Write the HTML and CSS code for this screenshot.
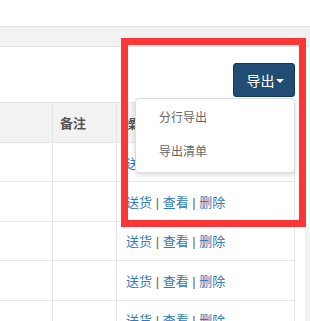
FILE: index.html
```html
<!DOCTYPE html>
<html lang="zh">
<head>
  <meta charset="UTF-8">
  <meta name="viewport" content="width=device-width, initial-scale=1">
  <title>订单列表</title>
  <link rel="stylesheet" href="styles.css">
</head>
<body>

  <div class="top"></div>
  <div class="tabbar"></div>

  <div class="main">
    <div class="panel">
      <!-- 工具栏 -->
      <div class="toolbar">
        <div class="export">
          <button class="btn-export" type="button">导出<span class="caret"></span></button>
          <ul class="menu">
            <li>分行导出</li>
            <li>导出清单</li>
          </ul>
        </div>
      </div>

      <!-- 列表 -->
      <table class="grid">
        <colgroup><col class="c1"><col class="c2"><col class="c3"></colgroup>
        <thead>
          <tr><th></th><th>备注</th><th>操作</th></tr>
        </thead>
        <tbody>
          <tr><td></td><td></td><td class="ops"><a>送货</a> | <a>查看</a> | <a>删除</a></td></tr>
          <tr><td></td><td></td><td class="ops"><a>送货</a> | <a>查看</a> | <a>删除</a></td></tr>
          <tr><td></td><td></td><td class="ops"><a>送货</a> | <a>查看</a> | <a>删除</a></td></tr>
          <tr><td></td><td></td><td class="ops"><a>送货</a> | <a>查看</a> | <a>删除</a></td></tr>
          <tr><td></td><td></td><td class="ops"><a>送货</a> | <a>查看</a> | <a>删除</a></td></tr>
        </tbody>
      </table>
    </div>
    <div class="scroll"></div>
  </div>

  <!-- 标注框 -->
  <div class="mark"></div>

</body>
</html>
```

FILE: styles.css
```css
body { margin: 0; font-family: "Liberation Sans", "Noto Sans CJK SC", sans-serif; font-size: 13px; color: #333; background: #fff; overflow: hidden; }
.top { height: 26px; }
.tabbar { height: 19px; background: #f2f2f2; border-top: 1px solid #e3e3e3; border-bottom: 1px solid #e3e3e3; }
.main { display: flex; }
.panel { width: 295px; }
.toolbar { height: 39px; padding-top: 16px; display: flex; justify-content: flex-end; }
.export { position: relative; height: 34px; }
.btn-export { width: 62px; height: 34px; background: #214d74; color: #fff; border: 1px solid #173854; border-radius: 3px; font-family: inherit; font-size: 14px; padding: 0 0 0 2px; cursor: pointer; display: flex; align-items: center; justify-content: center; }
.caret { display: inline-block; margin-left: 1px; margin-top: 2px; border-left: 4px solid transparent; border-right: 4px solid transparent; border-top: 4px solid #fff; }
.menu { position: absolute; right: 0; top: 35px; width: 158px; margin: 0; padding: 2px 0 3px; list-style: none; background: #fff; border: 1px solid #dcdcdc; border-radius: 4px; box-shadow: 0 2px 5px rgba(0,0,0,0.15); z-index: 2; }
.menu li { height: 34px; line-height: 34px; padding-left: 23px; font-size: 12px; color: #666; }
.grid { border-collapse: collapse; margin-left: -1px; table-layout: fixed; width: 296px; }
.grid col.c1 { width: 53px; }
.grid col.c2 { width: 64px; }
.grid th, .grid td { border: 1px solid #e6e6e6; padding: 0 0 0 9px; text-align: left; }
.grid td { height: 38.4px; }
.grid th { background: #f2f2f2; color: #555; font-weight: bold; height: 39px; padding-left: 7px; }
.ops { color: #666; white-space: nowrap; }
.ops a { color: #337ab7; }
.scroll { width: 5px; margin-left: 10px; margin-top: 180px; height: 200px; background: #f2f2f2; }
.mark { position: absolute; left: 121px; top: 38px; width: 171px; height: 175px; border: 7px solid #fb3636; z-index: 3; }
```
